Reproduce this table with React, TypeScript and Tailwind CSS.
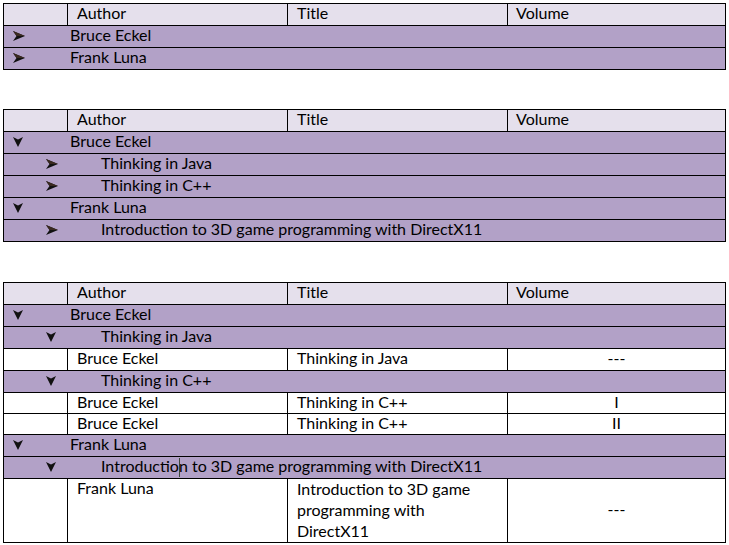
const HEAD = "bg-[#e5e0ec]";
const GROUP = "bg-[#b2a1c7]";

function ArrowRight() {
  return (
    <svg width="12" height="10" viewBox="0 0 12 10" className="shrink-0">
      <path d="M0 0 L12 5 L0 10 L3.5 5 Z" fill="#111" />
      <path d="M0 0 L12 5 L3.5 5 Z" fill="#3a2a20" />
    </svg>
  );
}

function ArrowDown() {
  return (
    <svg width="10" height="10" viewBox="0 0 10 10" className="shrink-0">
      <path d="M0 0 L5 2.5 L10 0 L5 10 Z" fill="#111" />
    </svg>
  );
}

function Header() {
  return (
    <div className={`flex h-[21px] leading-[17px] ${HEAD}`}>
      <div className="w-[63px]" />
      <div className="w-[220px] border-l border-black pl-[9px]">Author</div>
      <div className="w-[220px] border-l border-black pl-[9px]">Title</div>
      <div className="w-[218px] border-l border-black pl-[8px]">Volume</div>
    </div>
  );
}

function Group({ level, open, text, cursor }: { level: 0 | 1; open: boolean; text: string; cursor?: number }) {
  return (
    <div className={`flex h-[22px] border-t border-black ${GROUP}`}>
      <div className={`pt-[5px] ${level === 0 ? "w-[66px] pl-[9px]" : "w-[97px] pl-[42px]"}`}>
        {open ? <ArrowDown /> : <ArrowRight />}
      </div>
      <div className="leading-[17px] whitespace-nowrap">
        {cursor !== undefined ? (
          <>
            {text.slice(0, cursor)}
            <span className="inline-block w-px h-[19px] align-[-5px] bg-[#3c4a3c] -mr-px" />
            {text.slice(cursor)}
          </>
        ) : (
          text
        )}
      </div>
    </div>
  );
}

function Data({ author, title, volume, h = "h-[22px]" }: { author: string; title: React.ReactNode; volume: string; h?: string }) {
  return (
    <div className={`flex border-t border-black bg-white leading-[17px] ${h}`}>
      <div className="w-[63px]" />
      <div className="w-[220px] border-l border-black pl-[9px]">{author}</div>
      <div className="w-[220px] border-l border-black pl-[9px]">{title}</div>
      <div className="w-[218px] border-l border-black flex items-center justify-center pb-[4px]">{volume}</div>
    </div>
  );
}

export default function App() {
  return (
    <div className="bg-white w-[729px] h-[545px] pt-[3px] pl-[3px] text-[16px] text-black font-['Lato',sans-serif]">
      <div className="w-[723px] border border-black">
        <Header />
        <Group level={0} open={false} text="Bruce Eckel" />
        <Group level={0} open={false} text="Frank Luna" />
      </div>

      <div className="mt-[39px] w-[723px] border border-black">
        <Header />
        <Group level={0} open text="Bruce Eckel" />
        <Group level={1} open={false} text="Thinking in Java" />
        <Group level={1} open={false} text="Thinking in C++" />
        <Group level={0} open text="Frank Luna" />
        <Group level={1} open={false} text="Introduction to 3D game programming with DirectX11" />
      </div>

      <div className="mt-[40px] w-[723px] border border-black">
        <Header />
        <Group level={0} open text="Bruce Eckel" />
        <Group level={1} open text="Thinking in Java" />
        <Data author="Bruce Eckel" title="Thinking in Java" volume="---" />
        <Group level={1} open text="Thinking in C++" />
        <Data author="Bruce Eckel" title="Thinking in C++" volume="I" h="h-[21px]" />
        <Data author="Bruce Eckel" title="Thinking in C++" volume="II" h="h-[21px]" />
        <Group level={0} open text="Frank Luna" />
        <Group level={1} open text="Introduction to 3D game programming with DirectX11" cursor={11} />
        <Data
          author="Frank Luna"
          title={
            <div className="leading-[21px] -mt-[1px]">
              Introduction to 3D game
              <br />
              programming with
              <br />
              DirectX11
            </div>
          }
          volume="---"
          h="h-[64px]"
        />
      </div>
    </div>
  );
}
